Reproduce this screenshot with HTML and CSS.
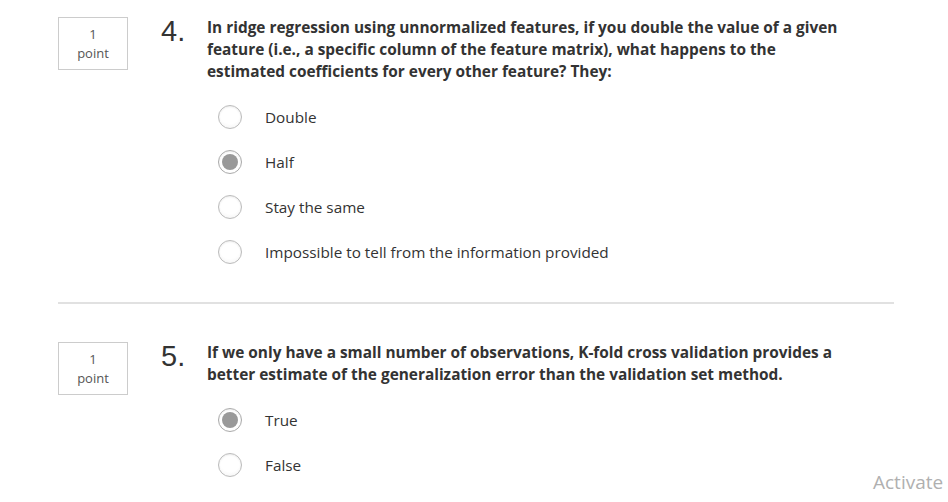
FILE: index.html
```html
<!DOCTYPE html>
<html>
<head>
<meta charset="utf-8">
<link rel="stylesheet" href="styles.css">
</head>
<body>
<div class="page">
  <section class="question q4">
    <div class="points"><span>1</span><span>point</span></div>
    <div class="qnum">4.</div>
    <div class="qbody">
      <p class="prompt">In ridge regression using unnormalized features, if you double the value of a given feature (i.e., a specific column of the feature matrix), what happens to the estimated coefficients for every other feature? They:</p>
      <ul class="options">
        <li><span class="radio"></span><span class="label">Double</span></li>
        <li><span class="radio checked"></span><span class="label">Half</span></li>
        <li><span class="radio"></span><span class="label">Stay the same</span></li>
        <li><span class="radio"></span><span class="label">Impossible to tell from the information provided</span></li>
      </ul>
    </div>
  </section>
  <hr class="divider">
  <section class="question q5">
    <div class="points"><span>1</span><span>point</span></div>
    <div class="qnum">5.</div>
    <div class="qbody">
      <p class="prompt">If we only have a small number of observations, K-fold cross validation provides a better estimate of the generalization error than the validation set method.</p>
      <ul class="options">
        <li><span class="radio checked"></span><span class="label">True</span></li>
        <li><span class="radio"></span><span class="label">False</span></li>
      </ul>
    </div>
  </section>
</div>
<div class="watermark">Activate<br><span class="sub">Go to Settings</span></div>
</body>
</html>
```
FILE: styles.css
```css
html, body {
  margin: 0;
  padding: 0;
  background: #fff;
  height: 502px;
  overflow: hidden;
}
body {
  font-family: "Open Sans", "Liberation Sans", sans-serif;
  color: #333;
  position: relative;
}
.page {
  padding-left: 58px;
  width: 836px;
}
.question {
  display: flex;
  align-items: flex-start;
}
.q4 { padding-top: 17px; }
.q5 { padding-top: 38px; }
.points {
  width: 68px;
  height: 51px;
  border: 1px solid #ccc;
  display: flex;
  flex-direction: column;
  align-items: center;
  justify-content: center;
  font-size: 13px;
  line-height: 19px;
  color: #555;
  flex: none;
}
.qnum {
  width: 79px;
  padding-left: 33px;
  box-sizing: border-box;
  flex: none;
  font-family: "Liberation Sans", Arial, sans-serif;
  font-size: 29px;
  line-height: 30px;
  margin-top: -1px;
  color: #333;
}
.qbody { flex: 1; }
.prompt {
  margin: 0;
  font-size: 15.4px;
  font-weight: 700;
  line-height: 22px;
  color: #333;
  width: 640px;
}
.options {
  list-style: none;
  margin: 11px 0 0 0;
  padding: 0 0 0 11px;
}
.options li {
  display: flex;
  align-items: center;
  height: 45px;
}
.radio {
  width: 22px;
  height: 22px;
  border-radius: 50%;
  border: 1px solid #bbb;
  background: radial-gradient(circle at 50% 35%, #fff 55%, #f0f0f0 100%);
  box-shadow: inset 0 1px 2px rgba(0,0,0,0.08);
  flex: none;
  position: relative;
}
.radio.checked {
  border-color: #aaa;
  background: #fff;
}
.radio.checked::after {
  content: "";
  position: absolute;
  left: 3px;
  top: 3px;
  width: 16px;
  height: 16px;
  border-radius: 50%;
  background: #999;
}
.label {
  margin-left: 23px;
  font-size: 15.3px;
  color: #333;
}
.divider {
  border: 0;
  height: 2px;
  background: #e1e1e1;
  margin: 28px 0 0 0;
  width: 836px;
}
.watermark {
  position: absolute;
  left: 873px;
  top: 469px;
  font-family: "Open Sans", "Liberation Sans", sans-serif;
  font-size: 19px;
  line-height: 27px;
  color: #b0b0b0;
  white-space: nowrap;
}
.watermark .sub { font-size: 13px; }
```
